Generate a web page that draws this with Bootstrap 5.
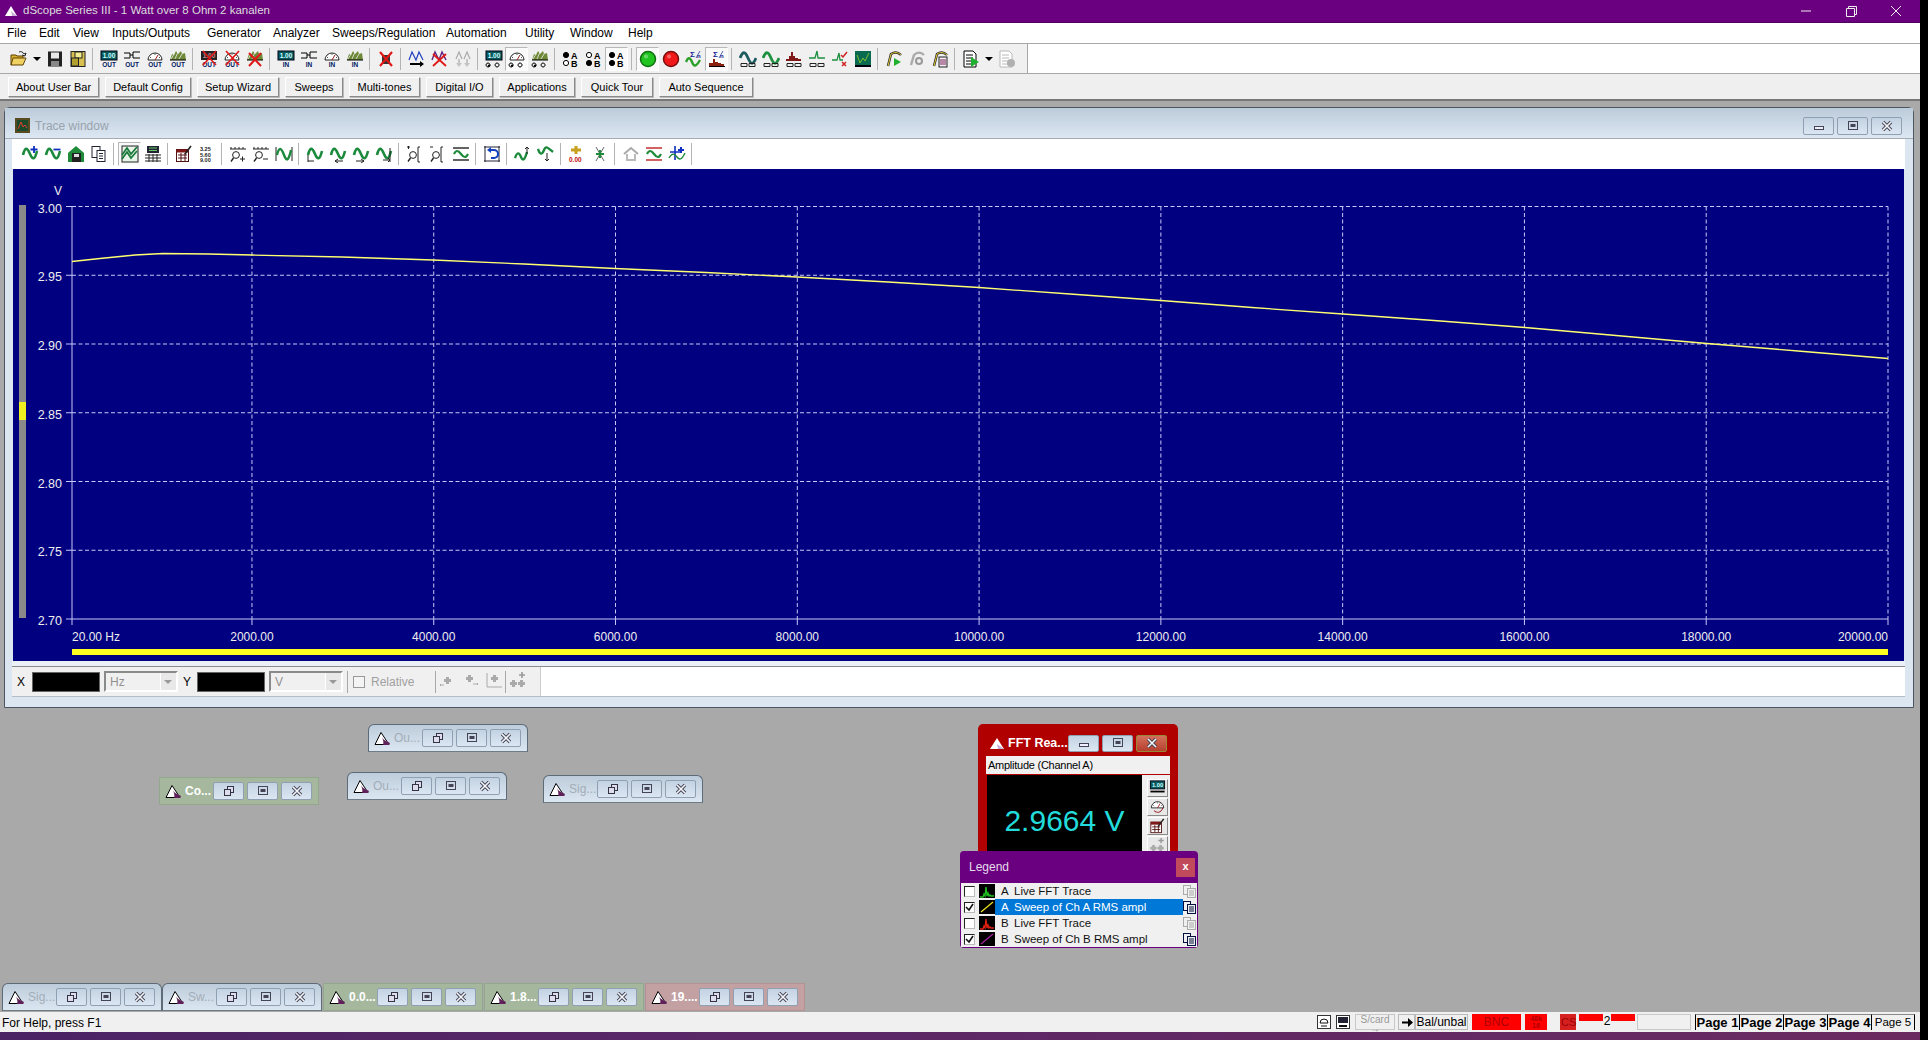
<!DOCTYPE html>
<html lang="en">
<head>
  <meta charset="UTF-8">
  <title>dScope Series III - 1 Watt over 8 Ohm 2 kanalen</title>
  <link href="https://cdn.jsdelivr.net/npm/bootstrap@5.3.0/dist/css/bootstrap.min.css" rel="stylesheet">
  <style>
    html, body { height: 100%; }
    body { background: #000; font-family: "Liberation Sans", Arial, sans-serif; font-size: 12px; color: #000; overflow: hidden; }
    svg text { font-family: "Liberation Sans", Arial, sans-serif; }
    .app { width: 1920px; height: 1040px; }

    .title-bar { height: 23px; background: #6a0080; border-bottom: 1px solid #4f0060; color: #ddd; padding-left: 4px; font-size: 11.5px; }
    .title-bar .app-name { margin-left: 5px; }
    .sys-btns { margin-left: auto; padding-right: 2px; }
    .sys-btns svg { display: block; width: 45px; height: 20px; }

    .menu-bar { height: 21px; background: #fff; border-bottom: 1px solid #a8a8a8; padding-left: 7px; }
    .menu-bar a { color: #000; text-decoration: none; }
    .mi-file { width: 32px; } .mi-edit { width: 34px; } .mi-view { width: 39px; } .mi-io { width: 95px; }
    .mi-gen { width: 66px; } .mi-ana { width: 59px; } .mi-swp { width: 114px; } .mi-aut { width: 79px; }
    .mi-uti { width: 45px; } .mi-win { width: 58px; }

    .tool-row { height: 30px; background: #fff; border-bottom: 1px solid #a8a8a8; }
    .main-tools { height: 29px; width: 1028px; padding-left: 7px; background: #f0f0f0; border-right: 1px solid #a8a8a8; }
    .tb-cell { width: 23px; height: 24px; flex: none; display: flex; align-items: center; justify-content: center; }
    .tb-cell svg { width: 18px; height: 18px; display: block; }
    .tb-on { background: #fafafa; border: 1px solid #b8b8b8; border-right-color: #fff; border-bottom-color: #fff; }
    .tb-sep { width: 8px; height: 22px; flex: none; position: relative; }
    .tb-sep::after { content: ""; position: absolute; left: 3px; top: 0; bottom: 0; border-left: 1px solid #b4b4b4; }
    .tb-arrow { width: 13px; flex: none; display: flex; justify-content: center; }
    .tb-arrow::after { content: ""; border: 4px solid transparent; border-top: 4px solid #000; border-bottom: 0; }

    .user-bar { height: 27px; background: #efefef; border-bottom: 2px solid #777; padding: 3px 0 0 8px; gap: 6px; }
    .user-btn { height: 20px; padding: 0; border-radius: 0; font-size: 11px; line-height: 17px; color: #000; background: #f0f0f0;
      border: 1px solid; border-color: #fff #8a8a8a #8a8a8a #fff; box-shadow: 1px 1px 0 #bbb; }
    .ub-a { width: 91px; } .ub-b { width: 86px; } .ub-c { width: 82px; } .ub-d { width: 58px; } .ub-e { width: 71px; }
    .ub-f { width: 67px; } .ub-g { width: 76px; } .ub-h { width: 72px; } .ub-i { width: 94px; }

    .mdi { height: 911px; background: #a9a9a9; padding: 6px 0 0 4px; position: relative; }
    .trace-win { width: 1910px; height: 601px; background: #dce6f1; border: 1px solid #4c5560; border-radius: 6px 6px 0 0; }
    .trace-head { height: 31px; background: linear-gradient(#bccbda, #dce7f2); border-bottom: 1px solid #a4adb6; padding: 5px 0 0 10px; color: #98a2ac; font-size: 12px; }
    .trace-head .head-ico { width: 15px; height: 15px; margin-right: 5px; }
    .win-btns { margin-left: auto; gap: 3px; }
    .trace-head .win-btns { margin-right: 11px; }
    .wbtn { width: 31px; height: 18px; flex: none; display: flex; align-items: center; justify-content: center; border: 1px solid #8fa0b2; border-radius: 2px; background: linear-gradient(#c3d2e2, #dbe6f2); }
    .wbtn svg { width: 14px; height: 12px; display: block; }
    .trace-body { margin: 0 8px 0 7px; }
    .trace-tools { height: 30px; background: #fff; padding-left: 6px; }
    .plot { display: block; margin-left: 1px; }
    .plot-gap { height: 6px; background: #eaf0f6; border-bottom: 1px solid #8a8a8a; }
    .cursor-bar { height: 30px; background: #f0f0f0; border-bottom: 1px solid #b4bcc4; }
    .cur-label { width: 20px; padding-left: 5px; }
    .cur-y { width: 19px; padding-left: 5px; }
    .cur-val { width: 68px; height: 20px; background: #000; border: 1px solid #666; flex: none; }
    .cur-combo { width: 74px; height: 21px; margin-left: 4px; padding-left: 4px; color: #909090; background: #f0f0f0; border: 2px solid; border-color: #8a8a8a #fff #fff #8a8a8a; flex: none; position: relative; }
    .cur-combo::after { content: ""; position: absolute; right: 0; top: 0; bottom: 0; width: 16px; background: #e8e8e8; border-left: 1px solid #fff; }
    .cur-combo::before { content: ""; position: absolute; right: 4px; top: 7px; z-index: 1; border: 4px solid transparent; border-top: 4px solid #999; border-bottom: 0; }
    .cur-sep { height: 22px; border-left: 1px solid #a8a8a8; flex: none; }
    .cur-chk { width: 12px; height: 12px; border: 1px solid #999; background: #f4f4f4; margin: 0 6px 0 5px; flex: none; }
    .cur-rel { color: #a0a0a0; width: 64px; }
    .cur-ico { width: 23px; flex: none; display: flex; justify-content: center; }
    .cur-ico svg { width: 18px; height: 18px; }
    .cur-fill { margin-left: auto; width: 1365px; height: 100%; background: #fff; border-left: 1px solid #ccc; }

    .mini-win { position: absolute; width: 160px; height: 28px; padding-left: 5px; background: linear-gradient(#bdccdb, #dbe6f1); border: 1px solid #5d6b78; border-bottom-color: #6e7c88; border-radius: 6px 6px 0 0; color: #a3adb7; overflow: hidden; }
    .mini-win .tri { width: 17px; height: 15px; flex: none; margin-right: 3px; }
    .mini-win .win-btns { margin-right: 6px; }
    .mini-grn { background: #a5b89d; border-color: #93a78c; border-radius: 0; color: #fff; font-weight: 700; }
    .mini-pnk { background: #c3a1a3; border-color: #b39294; border-radius: 0; color: #fff; font-weight: 700; }

    .fft-win { position: absolute; left: 978px; top: 623px; width: 200px; height: 135px; background: #b00000; border-radius: 5px 5px 0 0; }
    .fft-head { height: 32px; padding: 6px 11px 0 11px; color: #fff; font-size: 12.5px; font-weight: 700; white-space: nowrap; }
    .fft-head .tri { width: 17px; height: 13px; margin-right: 2px; flex: none; }
    .fft-head .wbtn { height: 17px; width: 31px; }
    .fft-head .win-btns { margin: 0 0 0 auto; }
    .fft-close { background: linear-gradient(#d46f5a, #b5402e); border-color: #983; }
    .fft-label { height: 18px; margin: 0 8px; background: #f0f0f0; padding-left: 2px; font-size: 11px; letter-spacing: -.25px; line-height: 18px; }
    .fft-main { margin: 1px 8px 0 9px; background: #f0f0f0; height: 77px; }
    .fft-read { width: 155px; height: 77px; background: #000; color: #22dcdc; font-size: 30px; padding-top: 14px; }
    .fft-side { gap: 1px; padding: 4px 0 0 5px; }
    .fft-sbtn { width: 21px; height: 20px; background: #e8e8e8; border: 1px solid; border-color: #fff #888 #888 #fff; display: flex; align-items: center; justify-content: center; }
    .fft-sbtn svg { width: 17px; height: 16px; }

    .legend-win { position: absolute; left: 960px; top: 750px; width: 238px; height: 97px; background: #6a0080; border-radius: 4px; padding: 0 1px 1px; }
    .legend-head { height: 32px; padding: 0 2px 0 8px; color: #e6dcea; }
    .legend-x { width: 19px; height: 19px; background: #c04a5c; color: #fff; font-weight: 700; font-size: 11px; line-height: 17px; text-align: center; }
    .legend-list { border-radius: 0; background: #f0f0f0; }
    .legend-list .list-group-item { height: 16px; padding: 0 0 0 3px; border: 0; border-radius: 0; background: none; font-size: 11.5px; line-height: 16px; color: #111; display: flex; align-items: center; }
    .lg-box { width: 11px; height: 11px; flex: none; background: #fff; border: 1px solid #222; border-right-color: #bbb; border-bottom-color: #bbb; }
    .lg-box svg { display: block; width: 9px; height: 9px; }
    .lg-trace { width: 16px; height: 14px; flex: none; margin: 0 0 0 4px; background: #000; display: block; }
    .lg-name { width: 188px; padding-left: 6px; height: 16px; white-space: nowrap; flex: none; }
    .lg-ch { display: inline-block; width: 13px; }
    .lg-sel { background: #0078d7; color: #fff; }
    .lg-doc { width: 13px; height: 13px; flex: none; }

    .status-bar { height: 20px; background: #f0f0f0; padding: 1px 5px 0 2px; }
    .st-item { height: 16px; flex: none; margin-top: 1px; font-size: 12px; line-height: 15px; text-align: center; border: 1px solid #c8c8c8; }
    .st-ico { width: 14px; border: 0; margin-right: 5px; }
    .st-ico svg, .st-arrow svg { display: block; width: 14px; height: 16px; }
    .st-card { width: 40px; margin-right: 3px; color: #999; font-size: 10px; line-height: 9px; }
    .st-arrow { width: 17px; border-color: #bbb; padding-left: 1px; }
    .st-bal { width: 53px; margin-right: 4px; border-color: #bbb; }
    .st-red { background: #f00; border-color: #f00; color: #b00000; }
    .st-bnc { width: 49px; margin-right: 4px; }
    .st-fs { width: 22px; margin-right: 13px; font-size: 7px; line-height: 7px; font-weight: 700; }
    .st-cs { width: 16px; margin-right: 3px; background: #d62020; border-color: #d62020; color: #900; font-size: 11px; }
    .st-two { width: 56px; margin-right: 2px; border: 0; position: relative; }
    .st-two::before, .st-two::after { content: ""; position: absolute; top: 0; height: 7px; width: 24px; background: #f00; }
    .st-two::before { left: 0; } .st-two::after { right: 0; }
    .st-none { width: 54px; margin-right: 4px; }
    .st-page { width: 44px; font-weight: 700; font-size: 13px; line-height: 15px; border: 0; border-left: 1px solid #000; border-top: 1px solid #888; white-space: nowrap; overflow: hidden; }
    .st-page5 { font-weight: 400; font-size: 11.5px; border-right: 1px solid #000; }

    .desk-strip { height: 8px; background: linear-gradient(90deg, #4a2364, #5b2767 40%, #6a2a60); }
  </style>
</head>
<body>
  <div class="app d-flex flex-column">

    <div class="title-bar d-flex align-items-center">
      <svg width="14" height="12" viewBox="0 0 14 12"><path d="M7 1L13 11H1z" fill="#fff"/><path d="M7 6l6 5H8z" fill="#c9b0d8"/></svg>
      <span class="app-name">dScope Series III - 1 Watt over 8 Ohm 2 kanalen</span>
      <div class="sys-btns d-flex">
        <svg viewBox="0 0 45 20"><path d="M18 10h10" stroke="#eee"/></svg>
        <svg viewBox="0 0 45 20"><path d="M18.5 7.5h8v8h-8zM20.5 7.5v-2h8v8h-2" fill="none" stroke="#eee"/></svg>
        <svg viewBox="0 0 45 20"><path d="M18 5l10 10M28 5L18 15" stroke="#eee"/></svg>
      </div>
    </div>

    <nav class="menu-bar d-flex align-items-center">
      <a href="#" class="mi-file">File</a><a href="#" class="mi-edit">Edit</a><a href="#" class="mi-view">View</a>
      <a href="#" class="mi-io">Inputs/Outputs</a><a href="#" class="mi-gen">Generator</a><a href="#" class="mi-ana">Analyzer</a>
      <a href="#" class="mi-swp">Sweeps/Regulation</a><a href="#" class="mi-aut">Automation</a><a href="#" class="mi-uti">Utility</a>
      <a href="#" class="mi-win">Window</a><a href="#">Help</a>
    </nav>

    <div class="tool-row">
      <div class="main-tools d-flex align-items-center" id="main-tools"></div>
    </div>

    <div class="user-bar d-flex">
      <button class="btn user-btn ub-a">About User Bar</button>
      <button class="btn user-btn ub-b">Default Config</button>
      <button class="btn user-btn ub-c">Setup Wizard</button>
      <button class="btn user-btn ub-d">Sweeps</button>
      <button class="btn user-btn ub-e">Multi-tones</button>
      <button class="btn user-btn ub-f">Digital I/O</button>
      <button class="btn user-btn ub-g">Applications</button>
      <button class="btn user-btn ub-h">Quick Tour</button>
      <button class="btn user-btn ub-i">Auto Sequence</button>
    </div>

    <div class="mdi" id="mdi">
      <div class="trace-win">
        <div class="trace-head d-flex align-items-center">
          <svg class="head-ico" viewBox="0 0 15 15"><rect width="15" height="15" fill="#5a4a20"/><rect x="2" y="2" width="11" height="11" fill="#1c4a2a"/><path d="M3 11l3-7 2 5 2-2 2 3" fill="none" stroke="#e04030"/></svg>
          Trace window
          <div class="win-btns d-flex" id="trace-btns"></div>
        </div>
        <div class="trace-body">
          <div class="trace-tools d-flex align-items-center" id="trace-tools"></div>
          <svg class="plot" id="plot" width="1891" height="492" viewBox="13 169 1891 492"></svg>
          <div class="plot-gap"></div>
          <div class="cursor-bar d-flex align-items-center">
            <span class="cur-label">X</span>
            <div class="cur-val"></div>
            <div class="cur-combo">Hz</div>
            <span class="cur-y">Y</span>
            <div class="cur-val"></div>
            <div class="cur-combo">V</div>
            <div class="cur-sep ms-1"></div>
            <div class="cur-chk"></div>
            <span class="cur-rel">Relative</span>
            <div class="cur-sep"></div>
            <div class="d-flex" id="cur-icons"></div>
            <div class="cur-fill"></div>
          </div>
        </div>
      </div>

      <div class="fft-win">
        <div class="fft-head d-flex align-items-center">
          <svg class="tri" viewBox="0 0 17 13"><path d="M8 1l7 11H1z" fill="#fff"/><path d="M8 7l7 5H9z" fill="#c9b0d8"/></svg>
          <span>FFT Rea...</span>
          <div class="win-btns d-flex" id="fft-btns"></div>
        </div>
        <div class="fft-label">Amplitude (Channel A)</div>
        <div class="fft-main d-flex">
          <div class="fft-read d-flex align-items-center justify-content-center">2.9664 V</div>
          <div class="fft-side d-flex flex-column" id="fft-side"></div>
        </div>
      </div>

      <div class="legend-win">
        <div class="legend-head d-flex align-items-center justify-content-between">
          <span>Legend</span>
          <div class="legend-x">x</div>
        </div>
        <div class="list-group legend-list" id="legend-list"></div>
      </div>
    </div>

    <div class="status-bar d-flex">
      <span class="align-self-center">For Help, press F1</span>
      <div class="ms-auto d-flex">
        <div class="st-item st-ico"><svg viewBox="0 0 14 16"><rect x=".5" y="1.5" width="13" height="13" fill="#fff" stroke="#333"/><path d="M3 9a4 4 0 0 1 8 0z" fill="none" stroke="#111"/><path d="M4 12h6" stroke="#111"/></svg></div>
        <div class="st-item st-ico"><svg viewBox="0 0 14 16"><rect x=".5" y="1.5" width="13" height="13" fill="#fff" stroke="#333"/><rect x="2" y="3" width="10" height="6" fill="#223"/><path d="M3 12h8" stroke="#111" stroke-width="2"/></svg></div>
        <div class="st-item st-card">S/card<br>&#8594;</div>
        <div class="st-item st-arrow"><svg viewBox="0 0 14 16"><path d="M2 6.5h6V3l5 4.500L8 12V8.500H2z" fill="#000"/></svg></div>
        <div class="st-item st-bal">Bal/unbal</div>
        <div class="st-item st-red st-bnc">BNC</div>
        <div class="st-item st-red st-fs">48k<br>16</div>
        <div class="st-item st-cs">CS</div>
        <div class="st-item st-two">2</div>
        <div class="st-item st-none"></div>
        <div class="st-item st-page">Page 1</div>
        <div class="st-item st-page">Page 2</div>
        <div class="st-item st-page">Page 3</div>
        <div class="st-item st-page">Page 4</div>
        <div class="st-item st-page st-page5">Page 5</div>
      </div>
    </div>
    <div class="desk-strip"></div>
  </div>

  <script src="https://cdn.jsdelivr.net/npm/bootstrap@5.3.0/dist/js/bootstrap.bundle.min.js"></script>
  <script>
    // small helpers for the 18x18 toolbar icons
    const tx = (x, y, s, c, t, extra = '') => `<text x="${x}" y="${y}" font-size="${s}" fill="${c}" font-weight="700" ${extra}>${t}</text>`;
    const ln = (d, c = '#000', w = 1) => `<path d="${d}" fill="none" stroke="${c}" stroke-width="${w}"/>`;
    const fl = (d, c) => `<path d="${d}" fill="${c}"/>`;
    const SINE = 'M1 8c3-7 5-7 8 0s5 7 8 0';
    const cross = ln('M3 1L16 15M16 1L3 15', '#e01818', 1.6);
    const lab = t => tx(9, 17, 6.5, '#002060', t, 'text-anchor="middle"');

    const meter = `<rect x="1" y="1" width="16" height="9" fill="#0a5a60" stroke="#001"/>` + tx(9, 8, 6.5, '#cff', '1.00', 'text-anchor="middle"');
    const port = ln('M1 3h6v5H1M7 5h3M10 2v6h7M10 2h7');
    const dial = `<path d="M2 10a7 7 0 0 1 14 0z" fill="#fff" stroke="#222"/>` + ln('M9 10l3-5', '#a02020') + ln('M4 7l1 1M9 4v1M14 7l-1 1', '#555');
    const blob = fl('M1 10l2-6 2 1 2-4 2 3 3-3 1 3 3-1 1 7z', '#6e8a38') + ln('M2 9l3-5M6 9l3-7M10 9l3-5', '#eee', .8) + ln('M1 10h16');
    const radios = ln('M3 13a2 2 0 1 0 .1 0M12 13a2 2 0 1 0 .1 0') + fl('M4 14.5a1.2 1.2 0 1 0 .1 0', '#000');
    const twoBox = ln('M2 13.5h6v3H2zM10 13.5h6v3h-6z', '#222');
    const ab = (a, b) => `<circle cx="4" cy="5" r="2.6" fill="${a ? '#000' : '#fff'}" stroke="#000"/><circle cx="4" cy="13" r="2.6" fill="${b ? '#000' : '#fff'}" stroke="#000"/>` + tx(9, 8.5, 9, '#000', 'A') + tx(9, 17, 9, '#000', 'B');
    const ball = (c, d) => `<circle cx="9" cy="9" r="7.5" fill="${c}" stroke="${d}" stroke-width="1.5"/><circle cx="7" cy="6.5" r="2" fill="#fff" opacity=".35"/>`;
    const sigma = tx(5, 7, 8, '#102090', '&#931;') + tx(12, 8, 6, '#102090', 'n') + ln('M11 8l4-7', '#102090', .7);
    const doc = c => `<path d="M2 1h9l3 3v13H2z" fill="#fff" stroke="${c}"/>` + ln('M4 5h7M4 8h7M4 11h7M4 14h7', c);
    const bracketWave = (c1, c2) => ln('M1 3h16', c1, 1.4) + ln('M1 15h16', c2, 1.4) + ln('M2 9c2-4 4-4 7 0s5 4 7 0', '#1e8a3a', 2.2);
    const waveArr = (a) => ln('M2 10c2-8 4-8 7-1s5 5 7-3', '#1c8a3c', 2.6) + a;
    const lens = (s) => `<circle cx="7" cy="10" r="3.4" fill="none" stroke="#222"/>` + ln('M4.5 13L2 16.5', '#222', 1.4) + s;

    const icons = {
      open: fl('M1 5h5l1 1h6v2H1z', '#d8b030') + fl('M1 8h14l-2 7H1z', '#f0d060') + ln('M1 5h5l1 1h6v2M1 5v10h12l3-7H3L1 15', '#604000') + ln('M9 2c2-1 4 0 5 2l2-1-1 3-3-1', '#222'),
      save: `<rect x="2" y="1.5" width="14" height="15" fill="#222"/><rect x="5" y="2.5" width="8" height="6" fill="#e8e8e8"/><rect x="5" y="11" width="8" height="5" fill="#888"/>`,
      saveAll: `<rect x="2" y="1.5" width="14" height="15" fill="#d8c050" stroke="#222"/><rect x="6" y="2" width="7" height="6" fill="#f4ee90" stroke="#222"/><rect x="2.5" y="8" width="7" height="8" fill="#b0a030" stroke="#222"/>`,
      o100: meter + lab('OUT'), ohz: port + lab('OUT'), ogauge: dial + lab('OUT'), ogear: blob + lab('OUT'),
      xo100: `<rect x="1" y="1" width="16" height="9" fill="#222"/>` + tx(9, 8, 6.5, '#c88', '1.00', 'text-anchor="middle"') + lab('OUT') + cross,
      xogauge: dial + lab('OUT') + cross,
      xogear: blob + ln('M3 3l12 13M15 3L3 16', '#e01818', 2),
      i100: meter + lab('IN'), ihz: port + lab('IN'), igauge: dial + lab('IN'), igear: blob + lab('IN'),
      xred: fl('M5 5h8v9H5z', '#333') + ln('M3 2l12 14M15 2L3 16', '#e01818', 2.2),
      w1: ln('M1 10l3-8 4 8 3-8 4 8', '#2040c0', 1.2) + fl('M2 13h10v-2l4 3-4 3v-2H2z', '#000'),
      w2: ln('M1 10l3-8 4 8 3-8 4 8', '#602080', 1.4) + ln('M2 4l13 12M15 4L2 16', '#e01818', 1.8),
      w3: ln('M2 9l3-7 3 7M10 9l3-7 3 7', '#aaa', 1.2) + fl('M4 9h2v4h2l-3 4-3-4h2zM12 9h2v4h2l-3 4-3-4h2z', '#c4c4c4'),
      m100: meter + radios, mgauge: dial + radios, mgear: blob + radios,
      ab1: ab(1, 0), ab2: ab(0, 1), ab3: ab(1, 1),
      go: ball('#22c422', '#0e700e'), stop: ball('#f01818', '#7a0c0c'),
      sigw: sigma + ln('M1 12c2-5 4-5 6 0s4 5 8-2', '#2aa02a', 2.4),
      sig: sigma + fl('M1 16v-3h4v-4h2v3h3v1h3v1h3v2z', '#8a2010') + ln('M1 16.5h16', '#000'),
      wdk: ln(SINE, '#1c5a60', 2.8) + twoBox, wgr: ln(SINE, '#1e9040', 2.8) + twoBox,
      bars: fl('M1 11V9h3V6h2V2h2v4h2v2h3v1h3v2z', '#801818') + twoBox,
      imp: ln('M1 8h6l2-7 1 7h7', '#1e9040', 1.3) + twoBox,
      impx: ln('M1 10h5l2-7 1 7h3', '#1e9040', 1.3) + ln('M10 5l2 2 4-5', '#d02020', 1.5) + ln('M11 12l4 4M15 12l-4 4', '#d02020', 1.5),
      chart: `<rect x="1" y="1" width="16" height="16" fill="#0a6a50"/><rect x="1" y="15" width="16" height="2" fill="#001"/>` + ln('M3 5l3 8 3-5 2 3 4-8', '#7ac030'),
      p1: ln('M3 16L6 4c3-2 7-2 10 1', '#222', 2.4) + ln('M3 16L6 4c3-2 7-2 10 1', '#e8d040', 1) + fl('M9 8l7 4-7 4z', '#20b030'),
      p2: ln('M3 15L6 5c3-3 7-3 10 0', '#aaa', 2.4) + `<circle cx="11" cy="11" r="3" fill="none" stroke="#999" stroke-width="2"/>`,
      p3: ln('M3 16L6 4c3-2 7-2 10 1', '#222', 2.4) + ln('M3 16L6 4c3-2 7-2 10 1', '#e8d040', 1) + `<rect x="8" y="7" width="8" height="10" fill="#eee" stroke="#222"/>` + ln('M9 10h6M9 12h6M9 14h6', '#802060'),
      doc: doc('#000') + fl('M9 7l8 5-8 5z', '#20b030'),
      docg: doc('#b8b8b8') + `<circle cx="13" cy="13" r="4" fill="#b0b0b0"/>`,
      wplus: waveArr(ln('M13 1v7M9.500 4.500h7', '#1030c0', 1.8)),
      wminus: waveArr(ln('M9.500 4.500h7', '#1030c0', 1.8)),
      tsave: fl('M1 8l8-7 8 7v9H1z', '#1e8a3a') + `<rect x="5" y="8" width="9" height="9" fill="#222"/><rect x="7" y="9" width="5" height="3" fill="#ddd"/>`,
      tcopy: `<rect x="2" y="1.5" width="8" height="11" fill="#fff" stroke="#223"/><rect x="7" y="5.5" width="8" height="11" fill="#fff" stroke="#223"/>` + ln('M9 8.500h4M9 11h4M9 13.500h4', '#223'),
      tgrid: `<rect x="1" y="1" width="16" height="16" fill="#e8f4e8" stroke="#222"/>` + ln('M1 10l5-7 4 6 6-7M1 14l5-7 4 6 6-7', '#1a7a3a', 1.8),
      ttab: `<rect x="3" y="1" width="12" height="7" fill="#223"/>` + ln('M5 3h8M5 5.500h8', '#6c6') + ln('M1 10h16M1 13h16M1 16h16M5 9v8M9 9v8M13 9v8', '#222'),
      tform: `<rect x="1.500" y="4.500" width="12" height="12" fill="#fff" stroke="#501010"/><rect x="1.500" y="4.500" width="12" height="3" fill="#801818"/>` + ln('M3 10h9M3 13h9M6 8v8M10 8v8', '#501010') + ln('M10 9l6-8', '#222', 1.6),
      tnum: tx(2, 6, 5.5, '#222', '3.25') + tx(2, 11.5, 5.5, '#222', '5.60') + tx(2, 17, 5.5, '#222', '9.00'),
      zxp: ln('M1 4h16M2 2v2M6 2v2M10 2v2M14 2v2', '#222') + lens(ln('M11 14h5M13.500 11.500v5', '#222')),
      zxm: ln('M1 4h16M2 2v2M6 2v2M10 2v2M14 2v2', '#222') + lens(ln('M11 14h5', '#222')),
      zfit: ln('M1 2v14M17 2v14', '#222') + ln('M2 10c2-8 4-8 7 0s5 4 7-5', '#1c8a3c', 2.4),
      wl: waveArr(ln('M2 10v7M2 16h6', '#222')),
      wld: waveArr(ln('M6 16h8M6 16l3-2M6 16l3 2', '#222')),
      wrd: waveArr(ln('M4 16h8M12 16l-3-2M12 16l-3 2', '#222')),
      wr: waveArr(ln('M15 3v14M8 15h7l-2-2M15 15l-2 2', '#222')),
      yp: lens(ln('M14 2h-2v15h2', '#222') + ln('M1 2h3M2.500 1v3', '#222')),
      ym: lens(ln('M14 2h-2v15h2', '#222') + ln('M1 2h3', '#222')),
      wband: bracketWave('#222', '#222'),
      undo: ln('M2 1v16M16 1v16M1 2h16M1 16h16', '#223') + ln('M7 5h4a4 4 0 0 1 0 8H8', '#1040c0', 2) + fl('M8 2v6L4 5z', '#1040c0'),
      wup: ln('M1 13c2-6 4-6 6-1s4 2 6-5', '#1c8a3c', 2.4) + ln('M13 2v7M11 4l2-2 2 2', '#222'),
      wdn: ln('M1 4c2 6 4 6 6 1s4-2 9 2', '#1c8a3c', 2.4) + ln('M10 8v8M8 14l2 2 2-2', '#222'),
      cur: ln('M8 1v8M3 5h10', '#c8a020', 3) + tx(1, 17, 6.5, '#c01010', '0.00'),
      curx: ln('M5 2l8 14M13 2L5 16', '#666', 1) + ln('M9 5v8M5 9h8', '#1e8a3a', 2),
      gup: ln('M2 9l7-6 7 6', '#aaa', 2) + ln('M5 9v6h8V9', '#bbb', 2),
      rwave: bracketWave('#c02020', '#c02020'),
      bcur: ln('M7 1v14M2 7h12', '#1030c0', 1.6) + ln('M1 13c3-5 5-5 8-1s5 2 8-4', '#1e8a3a', 1.4) + fl('M12 2h2v2h2v2h-2v2h-2V6h-2V4h2z', '#1030c0'),
      c1: fl('M7 6h3v2h2v3h-2v2H7v-2H5V8h2z', '#aaa') + ln('M1 14h4M1 14l1-1M1 14l1 1', '#aaa'),
      c2: fl('M6 4h3v2h2v3H9v2H6V9H4V6h2z', '#aaa') + ln('M11 13h5M16 13l-1-1M16 13l-1 1', '#aaa'),
      c3: fl('M8 4h3v2h2v3h-2v2H8V9H6V6h2z', '#aaa') + ln('M2 2v14h15', '#aaa'),
      c4: fl('M3 9h3v2h2v3H6v2H3v-2H1v-3h2zM11 9h3v2h2v3h-2v2h-3v-2H9v-3h2z', '#aaa') + ln('M13 1v6M10 4h6', '#999', 1.6)
    };

    const svg = k => `<svg viewBox="0 0 18 18">${icons[k]}</svg>`;
    function toolbar(el, spec) {
      el.innerHTML = spec.split(' ').map(k => {
        if (k === '|') return '<div class="tb-sep"></div>';
        if (k === 'v') return '<div class="tb-arrow"></div>';
        const on = k.endsWith('*');
        const key = on ? k.slice(0, -1) : k;
        return `<div class="tb-cell${on ? ' tb-on' : ''}">${svg(key)}</div>`;
      }).join('');
    }
    toolbar(document.getElementById('main-tools'),
      'open v save saveAll | o100 ohz ogauge ogear | xo100 xogauge xogear | i100 ihz igauge igear | xred | w1 w2 w3 | m100 mgauge* mgear | ab1 ab2 ab3* | go* stop sigw sig* | wdk wgr bars imp impx chart | p1 p2 p3 | doc v docg');
    toolbar(document.getElementById('trace-tools'),
      'wplus wminus tsave tcopy | tgrid* ttab | tform tnum | zxp zxm zfit | wl wld wrd wr | yp ym wband | undo | wup wdn | cur curx | gup rwave bcur |');
    document.getElementById('cur-icons').innerHTML =
      ['c1', 'c2', 'c3', '|', 'c4'].map(k => k === '|' ? '<div class="cur-sep"></div>' : `<div class="cur-ico">${svg(k)}</div>`).join('');

    // title-bar buttons for the child windows
    const glyph = {
      min: '<svg viewBox="0 0 14 12"><rect x="2.500" y="6.500" width="9" height="3" fill="#eef" stroke="#445"/></svg>',
      max: '<svg viewBox="0 0 14 12"><rect x="2.500" y="1.500" width="9" height="8" fill="none" stroke="#445"/><rect x="4.500" y="4" width="5" height="3" fill="#445"/></svg>',
      res: '<svg viewBox="0 0 14 12"><rect x="5.500" y="1.500" width="6" height="6" fill="#dde" stroke="#334"/><rect x="2.500" y="4.500" width="6" height="6" fill="#dde" stroke="#334"/></svg>',
      cls: '<svg viewBox="0 0 14 12"><path d="M3 2l8 8M11 2l-8 8" stroke="#445" stroke-width="3.4"/><path d="M3 2l8 8M11 2l-8 8" stroke="#f4f6fa" stroke-width="1.6"/></svg>'
    };
    const btns = list => list.map(k => `<div class="wbtn${k === 'fcl' ? ' fft-close' : ''}">${glyph[k === 'fcl' ? 'cls' : k]}</div>`).join('');
    document.getElementById('trace-btns').innerHTML = btns(['min', 'max', 'cls']);
    document.getElementById('fft-btns').innerHTML = btns(['min', 'max', 'fcl']);

    // minimised windows on the MDI canvas, page y minus 101
    const TRI = '<svg class="tri" viewBox="0 0 17 15"><path d="M7 1.500L15 13.500H1z" fill="#fff" stroke="#000"/><path d="M7 5c2 4 5 5 9 7l-1 2H9c1-3 0-6-2-9z" fill="#60205a"/></svg>';
    const minis = [
      [368, 623, 'Ou...', ''], [159, 676, 'Co...', 'mini-grn'], [347, 671, 'Ou...', ''], [543, 674, 'Sig...', ''],
      [2, 882, 'Sig...', ''], [162, 882, 'Sw...', ''], [323, 882, '0.0...', 'mini-grn'], [484, 882, '1.8...', 'mini-grn'], [645, 882, '19....', 'mini-pnk']
    ];
    const mdi = document.getElementById('mdi');
    const fftWin = mdi.querySelector('.fft-win');
    minis.forEach(([x, y, name, cls]) => {
      const w = document.createElement('div');
      w.className = `mini-win d-flex align-items-center ${cls}`;
      w.style.left = x + 'px';
      w.style.top = y + 'px';
      w.innerHTML = `${TRI}<span>${name}</span><div class="win-btns d-flex">${btns(['res', 'max', 'cls'])}</div>`;
      mdi.insertBefore(w, fftWin);
    });

    // FFT reader side buttons
    document.getElementById('fft-side').innerHTML = ['m100', 'igauge', 'tform', 'c4'].map(k => {
      const inner = k === 'm100' ? meter + ln('M1 13h16', '#000', 2) : k === 'igauge' ? dial + ln('M5 13c3 3 8 3 10-3', '#800') : icons[k];
      return `<div class="fft-sbtn"><svg viewBox="0 0 18 18">${inner}</svg></div>`;
    }).join('');

    // legend rows
    const SPIKE = 'M1 13h3l1-3 1 2 1-9 1 9 1-3 1 3 1-1 1 1h3';
    const RAMP = 'M2 12L8 7l6-5';
    const DOC = c => `<svg class="lg-doc" viewBox="0 0 13 13"><rect x=".5" y=".5" width="7" height="9" fill="#f0f0f0" stroke="${c}"/><rect x="4.500" y="3.500" width="8" height="9" fill="#f0f0f0" stroke="${c}"/><path d="M6 6h5M6 8h5M6 10h5" stroke="${c}"/></svg>`;
    const rows = [
      ['A', 'Live FFT Trace', false, SPIKE, '#20c020', false],
      ['A', 'Sweep of Ch A RMS ampl', true, RAMP, '#e8e020', true],
      ['B', 'Live FFT Trace', false, SPIKE, '#e02010', false],
      ['B', 'Sweep of Ch B RMS ampl', true, RAMP, '#a020a0', false]
    ];
    document.getElementById('legend-list').innerHTML = rows.map(([ch, name, on, path, col, sel]) => `
      <div class="list-group-item">
        <span class="lg-box">${on ? '<svg viewBox="0 0 9 9"><path d="M1 4l3 3 4-6" fill="none" stroke="#111" stroke-width="1.6"/></svg>' : ''}</span>
        <svg class="lg-trace" viewBox="0 0 16 14"><path d="${path}" fill="none" stroke="${col}" stroke-width="1.3"/></svg>
        <span class="lg-name${sel ? ' lg-sel' : ''}"><span class="lg-ch">${ch}</span>${name}</span>
        ${DOC(on ? '#001040' : '#aaa')}
      </div>`).join('');

    // plot, drawn in page coordinates
    const X0 = 72, X1 = 1888, Y0 = 206.5, Y1 = 619;
    const GRID = '#c8c8f8';
    let g = `<rect x="13" y="169" width="1891" height="492" fill="#000080"/>`;
    const yLabels = ['3.00', '2.95', '2.90', '2.85', '2.80', '2.75', '2.70'];
    yLabels.forEach((t, i) => {
      const y = Y0 + (Y1 - Y0) * i / 6;
      g += `<line x1="66" x2="${X0}" y1="${y}" y2="${y}" stroke="${GRID}"/>`;
      if (i < 6) g += `<line x1="${X0}" x2="${X1}" y1="${y}" y2="${y}" stroke="${GRID}" stroke-dasharray="4 2.5"/>`;
      g += `<text x="62" y="${y + 6}" fill="#eee" font-size="12.5" text-anchor="end">${t}</text>`;
    });
    g += `<line x1="${X0}" x2="${X1}" y1="${Y1}" y2="${Y1}" stroke="${GRID}"/>`;
    g += `<line x1="${X0}" x2="${X0}" y1="${Y0}" y2="${Y1 + 6}" stroke="${GRID}"/>`;
    const xLabels = ['20.00 Hz', '2000.00', '4000.00', '6000.00', '8000.00', '10000.00', '12000.00', '14000.00', '16000.00', '18000.00', '20000.00'];
    xLabels.forEach((t, i) => {
      const x = i === 0 ? X0 : X0 + (X1 - X0) * (i * 2000 - 20) / 19980;
      if (i > 0) {
        g += `<line x1="${x}" x2="${x}" y1="${Y0}" y2="${Y1}" stroke="${GRID}" stroke-dasharray="4 2.5"/>`;
        g += `<line x1="${x}" x2="${x}" y1="${Y1}" y2="${Y1 + 6}" stroke="${GRID}"/>`;
      }
      const anchor = i === 0 ? 'start' : i === 10 ? 'end' : 'middle';
      g += `<text x="${x}" y="641" fill="#eee" font-size="12" text-anchor="${anchor}">${t}</text>`;
    });
    g += `<text x="58" y="195" fill="#eee" font-size="12" text-anchor="middle">V</text>`;
    g += `<rect x="19" y="205" width="7" height="413" fill="#8a8a8a"/><rect x="19" y="402" width="7" height="18" fill="#f0f020"/>`;
    g += `<rect x="${X0}" y="649" width="${X1 - X0}" height="6" fill="#ffff20"/>`;
    const curve = [[72, 261.5], [100, 258.5], [135, 255], [163, 253.5], [208, 254], [252, 255], [342, 257], [433, 260], [524, 264], [615, 268.5], [706, 272.5], [797, 277], [888, 282], [979, 287.5], [1070, 294], [1161, 300.5], [1252, 307.5], [1343, 314], [1434, 320.5], [1525, 327.5], [1616, 335.5], [1707, 343.5], [1798, 351], [1888, 358.5]];
    g += `<polyline points="${curve.map(p => p.join(',')).join(' ')}" fill="none" stroke="#ffff70" stroke-width="1.3"/>`;
    document.getElementById('plot').innerHTML = g;
  </script>
</body>
</html>
